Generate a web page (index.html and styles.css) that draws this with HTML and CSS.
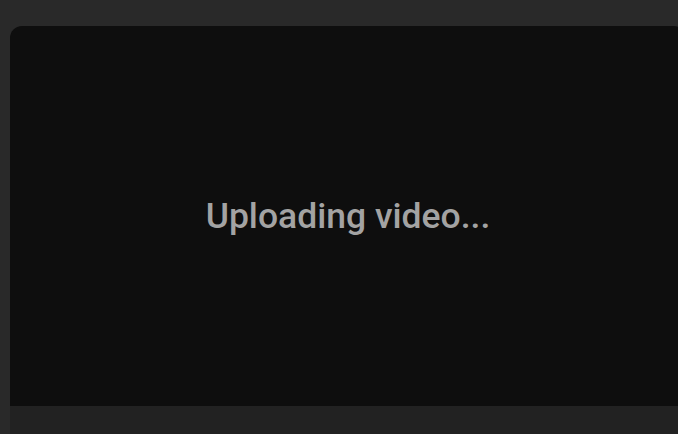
FILE: index.html
```html
<!DOCTYPE html>
<html lang="en">
<head>
    <meta charset="UTF-8">
    <meta name="viewport" content="width=device-width, initial-scale=1.0">
    <title>Upload</title>
    <link rel="stylesheet" href="styles.css">
</head>
<body>

<div class="player">
    <div class="screen">
        <span class="status">Uploading video...</span>
    </div>
    <div class="controls"></div>
</div>

</body>
</html>
```

FILE: styles.css
```css
body {
    font-family: 'Roboto', 'Liberation Sans', sans-serif;
    background-color: #292929;
    margin: 0;
    padding: 26px 0 0 10px;
    overflow: hidden;
    height: 100vh;
    box-sizing: border-box;
}

.player {
    width: 676px;
    border-radius: 12px 12px 0 0;
    overflow: hidden;
}

.screen {
    height: 380px;
    background-color: #0e0e0e;
    display: flex;
    justify-content: center;
    align-items: center;
}

.status {
    color: #a3a3a3;
    font-size: 35.5px;
    font-weight: 500;
}

.controls {
    height: 28px;
    background-color: #222222;
}
```
